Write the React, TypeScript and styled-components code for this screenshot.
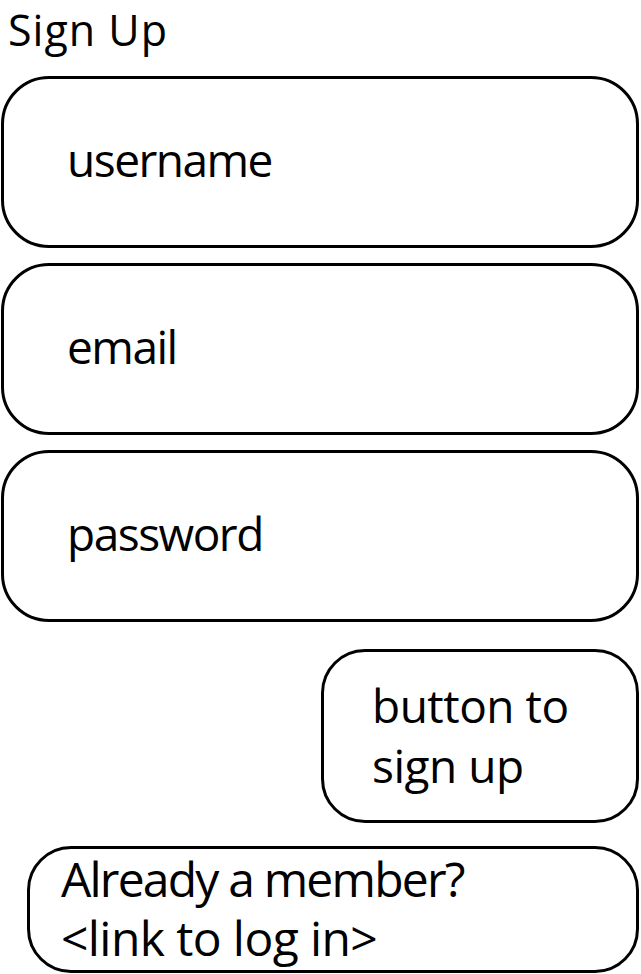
import React from "react";
import styled, { createGlobalStyle } from "styled-components";

const Global = createGlobalStyle`
  html, body { margin: 0; padding: 0; background: #ffffff; }
  body { font-family: "Open Sans", "Noto Sans", sans-serif; color: #000; }
`;

const Page = styled.div`
  width: 641px;
  box-sizing: border-box;
  padding: 0 2px 0 1px;
  display: flex;
  flex-direction: column;
`;

const Title = styled.h1`
  margin: 0;
  box-sizing: border-box;
  height: 76px;
  padding-left: 7px;
  font-size: 43px;
  font-weight: 400;
  line-height: normal;
  letter-spacing: 1px;
`;

const Fields = styled.div`
  display: flex;
  flex-direction: column;
  gap: 15px;
`;

const Field = styled.div`
  box-sizing: border-box;
  height: 172px;
  border: 3px solid #000;
  border-radius: 48px;
  display: flex;
  align-items: center;
  padding: 0 0 6px 63px;
  font-size: 46px;
  letter-spacing: -1.5px;
`;

const ButtonRow = styled.div`
  display: flex;
  justify-content: flex-end;
  margin-top: 27px;
`;

const SignUpButton = styled.div`
  box-sizing: border-box;
  width: 318px;
  height: 174px;
  border: 3px solid #000;
  border-radius: 44px;
  padding: 23px 0 0 48px;
  font-size: 46px;
  line-height: 60px;
  letter-spacing: -0.5px;
`;

const Footer = styled.div`
  box-sizing: border-box;
  margin: 23px 0 0 26px;
  height: 127px;
  border: 3px solid #000;
  border-radius: 44px;
  padding: 0 0 0 31px;
  font-size: 48px;
  line-height: 59px;
  letter-spacing: -1.8px;
`;

const Line = styled.div<{ $spacing?: number }>`
  white-space: nowrap;
  letter-spacing: ${(p) => (p.$spacing !== undefined ? `${p.$spacing}px` : "inherit")};
`;

export default function App() {
  return (
    <>
      <Global />
      <Page>
        <Title>Sign Up</Title>
        <Fields>
          <Field>username</Field>
          <Field>email</Field>
          <Field>password</Field>
        </Fields>
        <ButtonRow>
          <SignUpButton>
            <Line>button to</Line>
            <Line>sign up</Line>
          </SignUpButton>
        </ButtonRow>
        <Footer>
          <Line>Already a member?</Line>
          <Line $spacing={-0.6}>&lt;link to log in&gt;</Line>
        </Footer>
      </Page>
    </>
  );
}
